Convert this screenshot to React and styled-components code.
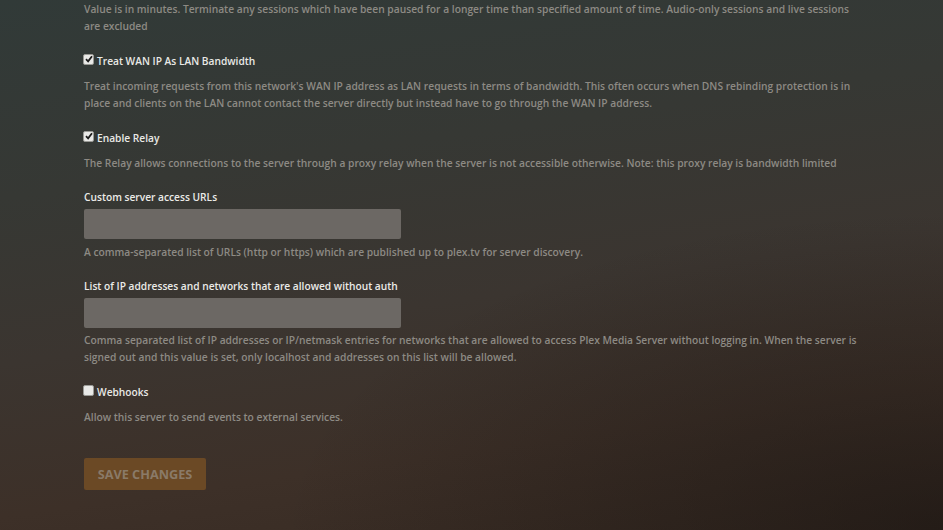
import React from 'react';
import styled, { createGlobalStyle } from 'styled-components';

const GlobalStyle = createGlobalStyle`
  html, body {
    margin: 0;
    padding: 0;
    height: 100%;
  }
  body {
    font-family: "Open Sans", "Liberation Sans", sans-serif;
    background-color: #352f2a;
    background-image:
      radial-gradient(ellipse 70% 60% at 100% 100%, rgba(20, 16, 14, 0.55), rgba(20, 16, 14, 0) 100%),
      linear-gradient(172deg, #313a38 0%, #363834 30%, #3b3530 55%, #3d3028 78%, #372a22 100%);
    min-height: 530px;
    overflow: hidden;
  }
`;

const Page = styled.div`
  min-height: 530px;
  padding: 1px 0 0 84px;
  box-sizing: border-box;
`;

const Form = styled.form`
  width: 780px;
  display: flex;
  flex-direction: column;
`;

const Group = styled.div`
  display: flex;
  flex-direction: column;
  margin-bottom: 15px;
`;

const CheckRow = styled.label`
  display: flex;
  align-items: center;
  gap: 3px;
  height: 20px;
  margin-top: 0.5px;
  margin-bottom: 7.5px;
  color: #e9e9e6;
  font-size: 10.2px;
  font-weight: 600;
`;

const Box = styled.span`
  width: 11px;
  height: 11px;
  box-sizing: border-box;
  margin: -3px 0 0 -1px;
  border: 1px solid #9a9a96;
  border-radius: 2px;
  background: #e9e9e7;
  display: flex;
  align-items: center;
  justify-content: center;
`;

const FieldLabel = styled.label`
  height: 20px;
  line-height: 20px;
  margin-bottom: 2px;
  color: #ebebe8;
  font-size: 10.2px;
  font-weight: 600;
`;

const TextInput = styled.input`
  width: 317px;
  height: 30px;
  box-sizing: border-box;
  border: none;
  border-radius: 2px;
  background: #6c6864;
  margin-bottom: 4.5px;
  outline: none;
`;

const Help = styled.p`
  margin: 0;
  color: #8d8a84;
  font-size: 10.25px;
  font-weight: 600;
  line-height: 17px;
`;

const SaveButton = styled.button`
  margin-top: 16.5px;
  align-self: flex-start;
  width: 122px;
  height: 32px;
  border: none;
  border-radius: 2px;
  background: #6b4925;
  color: #8a7a68;
  font-family: "Open Sans", "Liberation Sans", sans-serif;
  font-size: 12.7px;
  font-weight: 700;
  text-transform: uppercase;
  padding: 0;
`;

const Checkbox = ({ checked }) => (
  <Box>
    {checked && (
      <svg width="8" height="8" viewBox="0 0 8 8">
        <path d="M1 4.2 L3.1 6.3 L7 1.2" fill="none" stroke="#1c1c1c" strokeWidth="1.8" />
      </svg>
    )}
  </Box>
);

const checkSettings = [
  {
    label: 'Treat WAN IP As LAN Bandwidth',
    checked: true,
    help: "Treat incoming requests from this network's WAN IP address as LAN requests in terms of bandwidth. This often occurs when DNS rebinding protection is in place and clients on the LAN cannot contact the server directly but instead have to go through the WAN IP address.",
  },
  {
    label: 'Enable Relay',
    checked: true,
    help: 'The Relay allows connections to the server through a proxy relay when the server is not accessible otherwise. Note: this proxy relay is bandwidth limited',
  },
];

const textSettings = [
  {
    label: 'Custom server access URLs',
    help: 'A comma-separated list of URLs (http or https) which are published up to plex.tv for server discovery.',
  },
  {
    label: 'List of IP addresses and networks that are allowed without auth',
    help: 'Comma separated list of IP addresses or IP/netmask entries for networks that are allowed to access Plex Media Server without logging in. When the server is signed out and this value is set, only localhost and addresses on this list will be allowed.',
  },
];

const CheckSetting = ({ label, checked, help }) => (
  <Group>
    <CheckRow>
      <Checkbox checked={checked} />
      {label}
    </CheckRow>
    <Help>{help}</Help>
  </Group>
);

const TextSetting = ({ label, help }) => (
  <Group>
    <FieldLabel>{label}</FieldLabel>
    <TextInput type="text" />
    <Help>{help}</Help>
  </Group>
);

const App = () => (
  <React.Fragment>
    <GlobalStyle />
    <Page>
      <Form onSubmit={(e) => e.preventDefault()}>
        <Group>
          <Help>
            Value is in minutes. Terminate any sessions which have been paused for a longer time than specified amount
            of time. Audio-only sessions and live sessions are excluded
          </Help>
        </Group>
        {checkSettings.map((s) => (
          <CheckSetting key={s.label} {...s} />
        ))}
        {textSettings.map((s) => (
          <TextSetting key={s.label} {...s} />
        ))}
        <CheckSetting label="Webhooks" checked={false} help="Allow this server to send events to external services." />
        <SaveButton type="submit" disabled>
          Save Changes
        </SaveButton>
      </Form>
    </Page>
  </React.Fragment>
);

export default App;
